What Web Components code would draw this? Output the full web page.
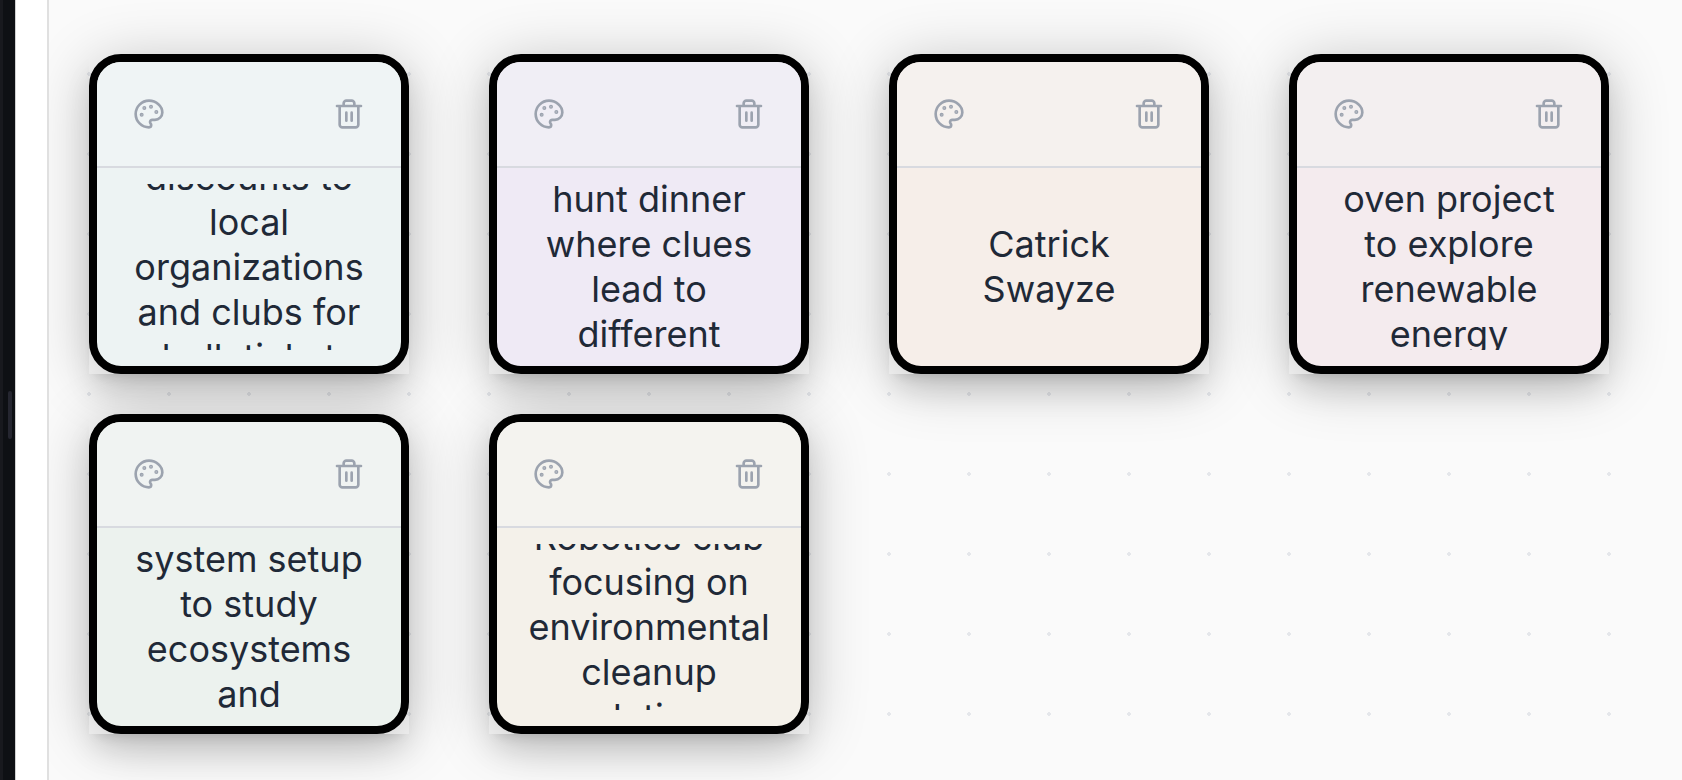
<!DOCTYPE html>
<html lang="en">
<head>
<meta charset="utf-8">
<title>Idea board</title>
<style>
  html, body { margin: 0; min-height: 100%; }
  body { font-family: Inter, "Liberation Sans", sans-serif; color: #1f2937; background: #fff; }
</style>
</head>
<body>
<board-app>
  <sticky-note style="--head:#eff4f5;--fill:#edf3f3">discounts to local organizations and clubs for bulk ticket</sticky-note>
  <sticky-note style="--head:#f0eef5;--fill:#efeaf5">hunt dinner where clues lead to different</sticky-note>
  <sticky-note style="--head:#f5f1ee;--fill:#f6eee9">Catrick Swayze</sticky-note>
  <sticky-note style="--head:#f3eff0;--fill:#f4ebee">oven project to explore renewable energy</sticky-note>
  <sticky-note style="--head:#f0f3f2;--fill:#ecf2ee">system setup to study ecosystems and</sticky-note>
  <sticky-note style="--head:#f4f3ef;--fill:#f4f1ea">Robotics club focusing on environmental cleanup solutions</sticky-note>
</board-app>

<template id="board-app">
  <style>
    :host { display: flex; min-height: 100vh; }
    side-rail { flex: none; }
    .gutter { flex: none; width: 31px; background: #fff; border-left: 1px solid #d1d1d1; border-right: 2px solid #e0e0e0; }
    dot-canvas { flex: 1; }
  </style>
  <side-rail></side-rail>
  <div class="gutter"></div>
  <dot-canvas><slot></slot></dot-canvas>
</template>

<template id="side-rail">
  <style>
    :host { display: flex; align-items: center; justify-content: flex-end; box-sizing: border-box; width: 15px; padding: 50px 3px 0 0; background: #0e1014; border-left: 3px solid #18191e; }
    .thumb { width: 4px; height: 48px; border-radius: 2px; background: #252630; }
  </style>
  <div class="thumb"></div>
</template>

<template id="dot-canvas">
  <style>
    :host {
      display: grid; box-sizing: border-box; align-content: start;
      grid-template-columns: repeat(auto-fill, 320px); gap: 40px 80px;
      padding: 54px 0 46px 40px; overflow: hidden;
      background: #fafafa radial-gradient(circle at 40px 40px, #e5e7eb 2px, transparent 2px) 0 34px / 80px 80px;
    }
  </style>
  <slot></slot>
</template>

<template id="sticky-note">
  <style>
    :host { display: block; height: 320px; box-shadow: 0 20px 30px -6px rgba(0,0,0,.12), 0 8px 12px -8px rgba(0,0,0,.14); }
    article { box-sizing: border-box; height: 100%; display: flex; flex-direction: column; overflow: hidden; border: 8px solid #000; border-radius: 32px; background: var(--fill); box-shadow: 0 8px 60px rgba(0,0,0,.23); }
    header { display: flex; flex: none; align-items: center; justify-content: space-between; height: 104px; padding: 0 36px; border-bottom: 2px solid #d8dae0; background: var(--head); }
    button { display: block; padding: 0; border: 0; background: none; color: #9ca3af; cursor: pointer; }
    svg { display: block; width: 32px; height: 32px; fill: none; stroke: currentColor; stroke-width: 2; stroke-linecap: round; stroke-linejoin: round; }
    .body { flex: 1; min-height: 0; display: flex; align-items: center; justify-content: center; margin: 16px 32px; overflow: hidden; }
    p { margin: 0; font-size: 36px; line-height: 45px; text-align: center; }
  </style>
  <article>
    <header>
      <button type="button" aria-label="Change colour">
        <svg viewBox="0 0 24 24" aria-hidden="true"><g fill="currentColor"><circle cx="13.5" cy="6.5" r=".5"/><circle cx="17.5" cy="10.5" r=".5"/><circle cx="8.5" cy="7.5" r=".5"/><circle cx="6.5" cy="12.5" r=".5"/></g><path d="M12 2C6.5 2 2 6.5 2 12s4.5 10 10 10c.926 0 1.648-.746 1.648-1.688 0-.437-.18-.835-.437-1.125-.29-.289-.438-.652-.438-1.125a1.64 1.64 0 0 1 1.668-1.668h1.996c3.051 0 5.555-2.503 5.555-5.554C21.965 6.012 17.461 2 12 2z"/></svg>
      </button>
      <button type="button" aria-label="Delete note">
        <svg viewBox="0 0 24 24" aria-hidden="true"><path d="M3 6h18M19 6v14c0 1-1 2-2 2H7c-1 0-2-1-2-2V6M8 6V4c0-1 1-2 2-2h4c1 0 2 1 2 2v2M10 11v6M14 11v6"/></svg>
      </button>
    </header>
    <div class="body"><p><slot></slot></p></div>
  </article>
</template>

<script>
  for (const name of ["side-rail", "dot-canvas", "sticky-note", "board-app"]) {
    customElements.define(name, class extends HTMLElement {
      constructor() {
        super();
        const root = this.attachShadow({ mode: "open" });
        root.append(document.getElementById(name).content.cloneNode(true));
      }
    });
  }
</script>
</body>
</html>
